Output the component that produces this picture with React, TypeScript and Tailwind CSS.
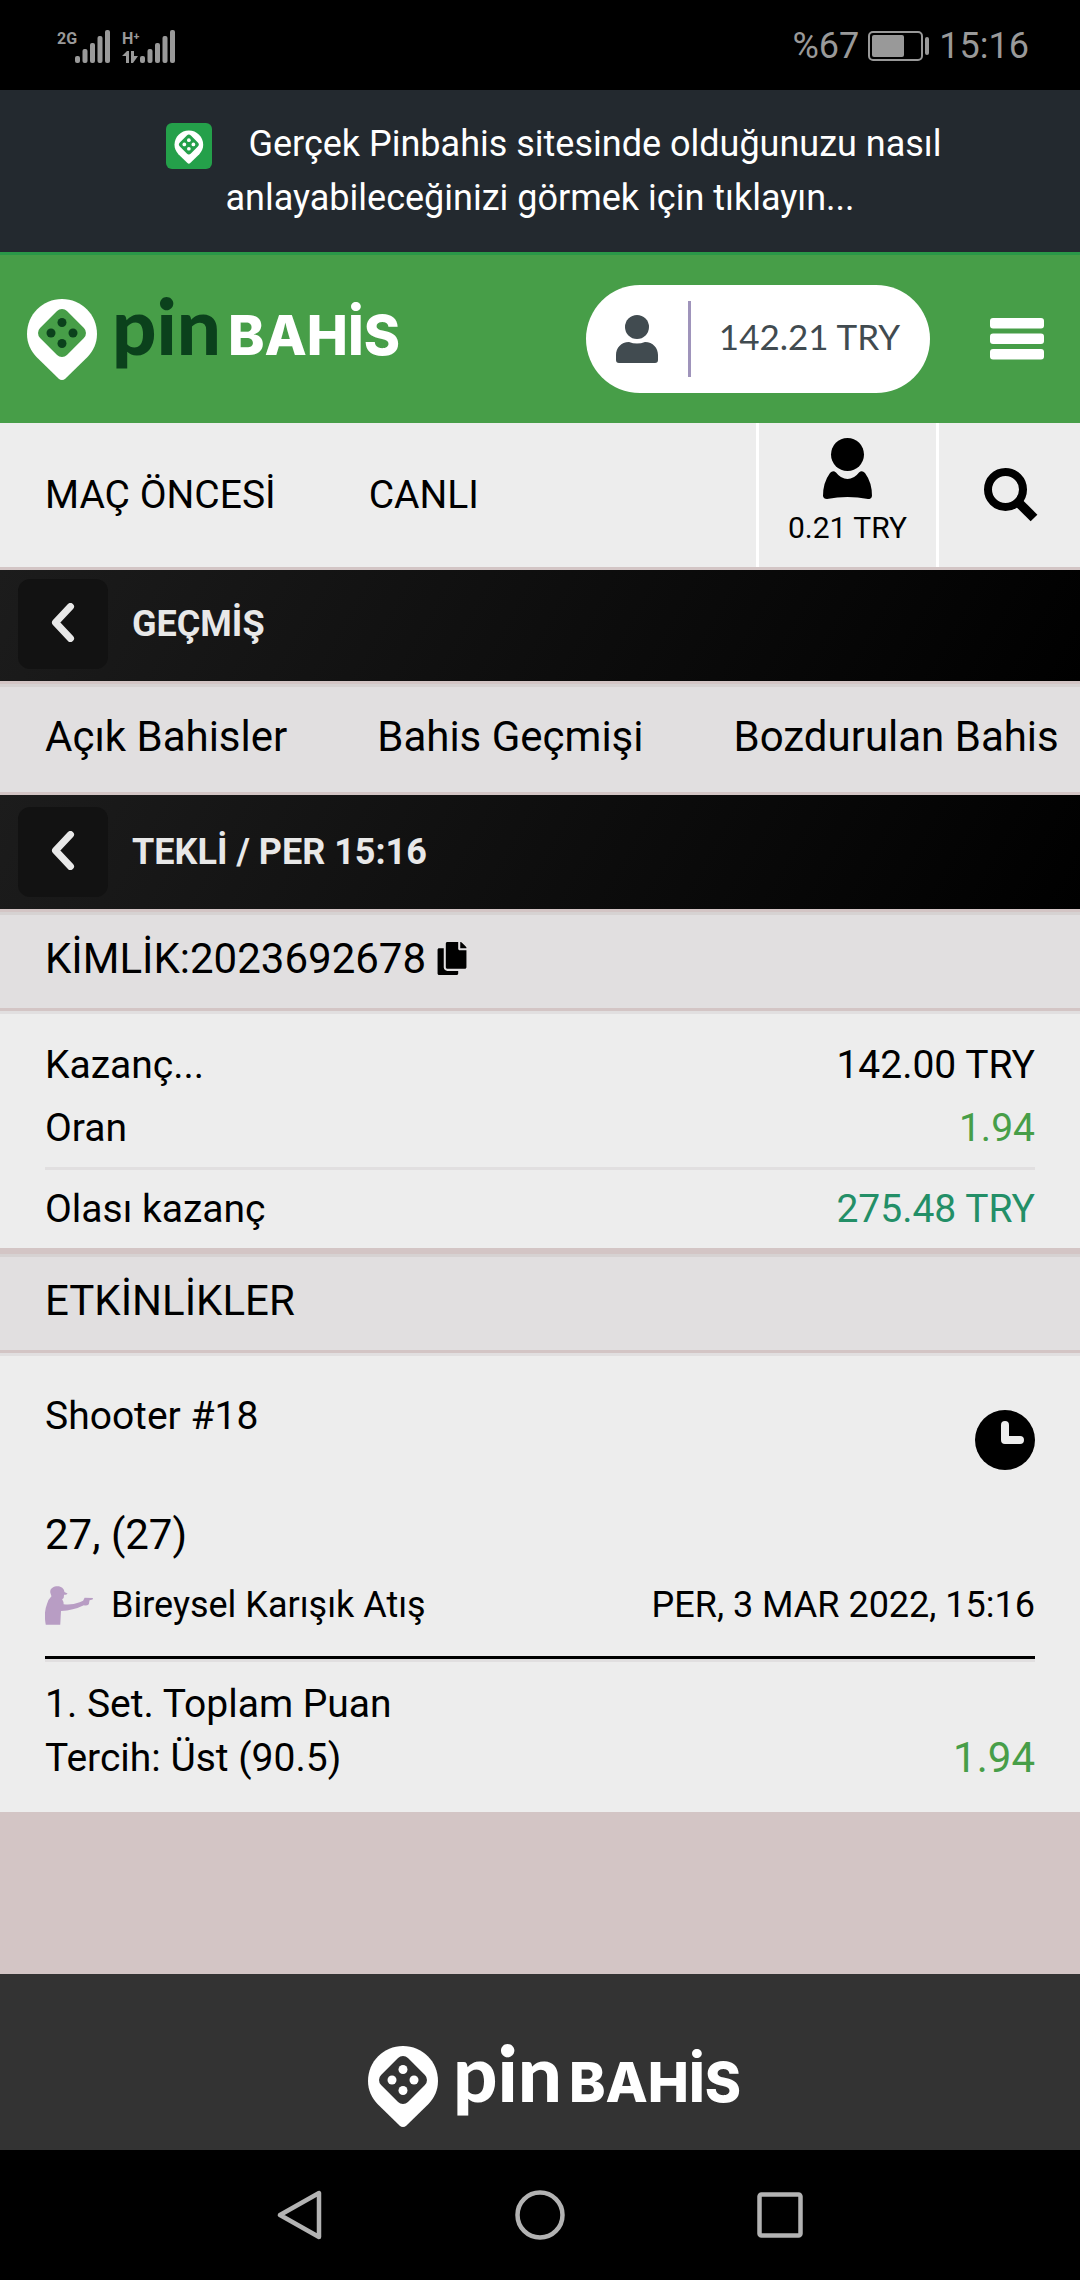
import { FC, ReactNode } from 'react';
import { FaCopy } from 'react-icons/fa';

interface LogoProps {
  pinText: string;
  dots: string;
  inner: string;
}

const PIN_PATH =
  'M35 0C54.500 0 70 15.500 70 35c0 9-3.500 16.500-9.500 23L38.500 79.500q-3.500 3-7 0L9.500 58C3.500 51.500 0 44 0 35 0 15.500 15.500 0 35 0Z';

const PinMark: FC<{ dots: string; inner: string }> = ({ dots, inner }) => (
  <>
    <path d={PIN_PATH} fill="#fff" />
    <rect x="16" y="15" width="38" height="38" rx="7" transform="rotate(45 35 34)" fill={inner} />
    <g fill={dots}>
      <circle cx="35" cy="23.500" r="4.500" />
      <circle cx="35" cy="44.500" r="4.500" />
      <circle cx="24" cy="34" r="4.500" />
      <circle cx="46" cy="34" r="4.500" />
    </g>
  </>
);

const Logo: FC<LogoProps> = ({ pinText, dots, inner }) => (
  <svg viewBox="0 0 380 81" className="h-[81px] w-[380px] overflow-visible" role="img" aria-label="pinBAHİS">
    <PinMark dots={dots} inner={inner} />
    <text x="85" y="56" fontFamily="Lato, sans-serif" fontSize="78" fontWeight="900" fill={pinText}>pin</text>
    <text x="201" y="56" fontFamily="Inter, sans-serif" fontSize="55" fontWeight="800" fill="#fff">BAHİS</text>
  </svg>
);

const SignalBars = () => (
  <svg viewBox="0 0 35 33" className="h-[33px] w-[35px]" fill="#999">
    <rect x="0" y="26" width="5" height="7" rx="2" />
    <rect x="7.500" y="19" width="5" height="14" rx="2" />
    <rect x="15" y="13" width="5" height="20" rx="2" />
    <rect x="22.500" y="6" width="5" height="27" rx="2" />
    <rect x="30" y="0" width="5" height="33" rx="2" />
  </svg>
);

const StatusBar = () => (
  <div className="h-[90px] bg-black text-[#999] flex items-center justify-between pl-[57px] pr-[51px] pt-[2px]">
    <div className="flex items-end gap-[12px]">
      <div className="flex">
        <span className="w-[18px] text-[16px] leading-[18px] font-bold">2G</span>
        <SignalBars />
      </div>
      <div className="flex">
        <div className="w-[18px]">
          <div className="text-[16px] leading-[18px] font-bold whitespace-nowrap">H⁺</div>
          <svg viewBox="0 0 16 12" className="w-[16px] h-[12px] mt-[3px]" fill="#999">
            <path d="M0 5 5 0h2v12H4V5ZM9 0h3v5h4l-5 7H9Z" />
          </svg>
        </div>
        <SignalBars />
      </div>
    </div>
    <div className="flex items-center gap-[9px] text-[36px]">
      <span>%67</span>
      <svg viewBox="0 0 62 30" className="w-[62px] h-[30px]">
        <rect x="1" y="1" width="53" height="28" rx="4" fill="none" stroke="#999" strokeWidth="2" />
        <rect x="4" y="4" width="32" height="22" rx="2" fill="#999" />
        <rect x="57" y="6" width="4" height="18" rx="2" fill="#999" />
      </svg>
      <span>15:16</span>
    </div>
  </div>
);

const Notice = () => (
  <a href="#" className="block bg-[#23292f] text-white text-center text-[36px] leading-[54px] py-[27px] px-[120px]">
    <svg viewBox="0 0 46 46" className="inline-block w-[46px] h-[46px] ml-[28px] mr-[27px] align-middle">
      <rect width="46" height="46" rx="6" fill="#24a04a" />
      <g transform="translate(8.500 7.500) scale(.41)">
        <PinMark dots="#fff" inner="#24a04a" />
      </g>
    </svg>{' '}
    Gerçek Pinbahis sitesinde olduğunuzu nasıl anlayabileceğinizi görmek için tıklayın...
  </a>
);

const Header = () => (
  <header className="bg-[#479e48] border-t-[3px] border-[#2a9848] h-[171px] flex items-center pl-[27px] pr-[36px]">
    <Logo pinText="#0b411c" dots="#0b411c" inner="#479e48" />
    <button className="ml-auto h-[108px] bg-white rounded-full flex items-center pl-[30px] pr-[30px] text-[#414b50]">
      <svg viewBox="0 0 42 48" className="w-[42px] h-[48px]" fill="currentColor">
        <circle cx="21" cy="12" r="12" />
        <path d="M13 27Q21 30 29 27C37 27 42 33 42 40v5q0 3-3 3H3q-3 0-3-3v-5C0 33 5 27 13 27Z" />
      </svg>
      <span className="w-[3px] h-[76px] bg-[#9f94bb] ml-[30px] mr-[28px]" />
      <span className="font-[Lato,sans-serif] text-[35px] pb-[6px]">142.21 TRY</span>
    </button>
    <button aria-label="Menü" className="ml-[60px]">
      <svg viewBox="0 0 54 42" className="w-[54px] h-[42px]" fill="#fff">
        <rect y="0" width="54" height="10.500" rx="3" />
        <rect y="15.500" width="54" height="10.500" rx="3" />
        <rect y="31" width="54" height="10.500" rx="3" />
      </svg>
    </button>
  </header>
);

const MainNav = () => (
  <nav className="bg-[#ededed] h-[144px] flex items-stretch text-[39px]">
    <a href="#" className="flex items-center pl-[45px]">MAÇ ÖNCESİ</a>
    <a href="#" className="flex items-center pl-[93px]">CANLI</a>
    <button className="ml-auto w-[183px] border-x-[3px] border-white flex flex-col items-center pt-[15px]">
      <svg viewBox="0 0 49 61" className="w-[49px] h-[61px]">
        <circle cx="24.500" cy="16.500" r="16.500" />
        <path d="M7 35q3-3 6-.500Q18 41 24.500 41T36 34.500q3-2.500 6 .500 7 9.500 7 23-.500 3.500-4 3Q24.500 57 4 61q-3.500 0-4-3Q0 44.500 7 35Z" />
      </svg>
      <span className="text-[30px] leading-[36px] mt-[11px]">0.21 TRY</span>
    </button>
    <button aria-label="Ara" className="w-[141px] flex items-center justify-center pl-[3px]">
      <svg viewBox="0 0 54 54" className="w-[54px] h-[54px]">
        <circle cx="21.500" cy="21.500" r="17.500" fill="none" stroke="#000" strokeWidth="8" />
        <path d="M34.500 34.500 50 50" stroke="#000" strokeWidth="9.500" />
      </svg>
    </button>
  </nav>
);

const TitleBar: FC<{ title: string; className: string }> = ({ title, className }) => (
  <div className={`flex items-center pl-[18px] my-[3px] bg-[linear-gradient(120deg,#1c1c1c,#000)] ${className}`}>
    <button aria-label="Geri" className="w-[90px] h-[90px] rounded-xl bg-[#121212] flex items-center justify-center pb-[4px]">
      <svg viewBox="0 0 24 39" className="w-[24px] h-[39px]" fill="none" stroke="#e8e8e8" strokeWidth="7" strokeLinecap="round" strokeLinejoin="round">
        <path d="M19.500 3.500 4.500 19.500l15 16" />
      </svg>
    </button>
    <h2 className="ml-[24px] text-[36px] leading-[36px] font-bold text-[#e8e8e8]">{title}</h2>
  </div>
);

const SectionHeader: FC<{ children: ReactNode }> = ({ children }) => (
  <div className="bg-[#e1dfe0] border-t-[3px] border-[#d6d2d2] h-[96px] flex items-center px-[45px] pb-[6px] text-[42px]">
    {children}
  </div>
);

const summary = [
  { label: 'Kazanç...', value: '142.00 TRY', color: 'text-black' },
  { label: 'Oran', value: '1.94', color: 'text-[#479e48]' },
];

const tabs = ['Açık Bahisler', 'Bahis Geçmişi', 'Bozdurulan Bahis'];

const Summary = () => (
  <dl className="bg-[#ededed] border-t-[3px] border-[#e1dfe0] mt-[3px] px-[45px] pt-[20px] text-[39px]">
    {summary.map((row) => (
      <div key={row.label} className="flex justify-between leading-[63px]">
        <dt>{row.label}</dt>
        <dd className={row.color}>{row.value}</dd>
      </div>
    ))}
    <div className="flex justify-between leading-[60px] mt-[7px] pt-[9px] pb-[9px] border-t-[3px] border-[#e1dfe0]">
      <dt>Olası kazanç</dt>
      <dd className="text-[#238f67]">275.48 TRY</dd>
    </div>
  </dl>
);

const EventCard = () => (
  <article className="bg-[#ededed] border-t-[3px] border-[#e1dfe0] mt-[3px] px-[45px] pt-[33px] pb-[27px] text-[39px]">
    <div className="flex justify-between items-start">
      <div className="leading-[54px]">Shooter #18</div>
      <svg viewBox="0 0 60 60" className="w-[60px] h-[60px] mt-[21px]">
        <circle cx="30" cy="30" r="30" />
        <path d="M30 15v15h15" fill="none" stroke="#ededed" strokeWidth="8" strokeLinecap="round" strokeLinejoin="round" />
      </svg>
    </div>
    <div className="text-[42px] leading-[54px] mt-[38px]">27, (27)</div>
    <div className="flex items-center text-[36px] leading-[54px] mt-[16px] pb-[24px]">
      <svg viewBox="0 0 126 101" className="w-[48px] h-[39px] mr-[18px]" fill="#b89dc4">
        <path d="M14 17C12 6 22 0 33 0c10 0 17 6 18 15l8 4q0 3-5 3h-4l-1 9-4 3q4 6 4 13 20 3 42-5l9-4 4-8 22 1-1 4-8 2-2 10q-5 5-13 3-28 14-60 15l-2 36H2Q-4 70 5 47q4-14 12-21Z" />
      </svg>
      <span>Bireysel Karışık Atış</span>
      <time className="ml-auto">PER, 3 MAR 2022, 15:16</time>
    </div>
    <div className="h-[6px] bg-[#e1dfe0] border-t-[3px] border-black" />
    <div className="flex justify-between items-end leading-[54px] pt-[15px]">
      <div>
        <div>1. Set. Toplam Puan</div>
        <div>Tercih: Üst (90.5)</div>
      </div>
      <div className="text-[42px] text-[#479e48]">1.94</div>
    </div>
  </article>
);

const SystemNav = () => (
  <div className="h-[130px] bg-black flex items-center justify-center gap-[190px]">
    <button aria-label="Geri">
      <svg viewBox="0 0 50 50" className="w-[50px] h-[50px]" fill="none" stroke="#b3b3b3" strokeWidth="4.500" strokeLinejoin="round">
        <path d="M44 3v44L5 25Z" />
      </svg>
    </button>
    <button aria-label="Ana ekran">
      <svg viewBox="0 0 50 50" className="w-[50px] h-[50px]" fill="none" stroke="#b3b3b3" strokeWidth="4.500">
        <circle cx="25" cy="25" r="22.500" />
      </svg>
    </button>
    <button aria-label="Son uygulamalar">
      <svg viewBox="0 0 50 50" className="w-[50px] h-[50px]" fill="none" stroke="#b3b3b3" strokeWidth="4.500">
        <rect x="4.500" y="4.500" width="41" height="41" rx="2" />
      </svg>
    </button>
  </div>
);

const App: FC = () => {
  return (
    <div className="min-h-screen flex flex-col bg-[#d3c5c5] text-black font-[Roboto,sans-serif]">
      <StatusBar />
      <Notice />
      <Header />
      <MainNav />

      {/* Bet history */}
      <main>
        <TitleBar title="GEÇMİŞ" className="h-[111px] pb-[3px]" />
        <nav className="bg-[#e1dfe0] border-t-[3px] border-[#d6d2d2] h-[108px] flex items-center gap-[90px] pl-[45px] pb-[6px] text-[42px] whitespace-nowrap overflow-hidden">
          {tabs.map((tab) => (
            <a key={tab} href="#">{tab}</a>
          ))}
        </nav>

        {/* Selected coupon */}
        <TitleBar title="TEKLİ / PER 15:16" className="h-[114px]" />
        <SectionHeader>
          KİMLİK:2023692678
          <button aria-label="Kopyala" className="ml-[11px]">
            <FaCopy className="w-[30px] h-[33px]" />
          </button>
        </SectionHeader>
        <Summary />
        <div className="mt-[6px]">
          <SectionHeader>ETKİNLİKLER</SectionHeader>
        </div>
        <EventCard />
      </main>

      <footer className="mt-auto bg-[#333] h-[176px] pt-[72px] flex justify-center pl-[36px]">
        <Logo pinText="#fff" dots="#fff" inner="#333" />
      </footer>
      <SystemNav />
    </div>
  );
};

export default App;
